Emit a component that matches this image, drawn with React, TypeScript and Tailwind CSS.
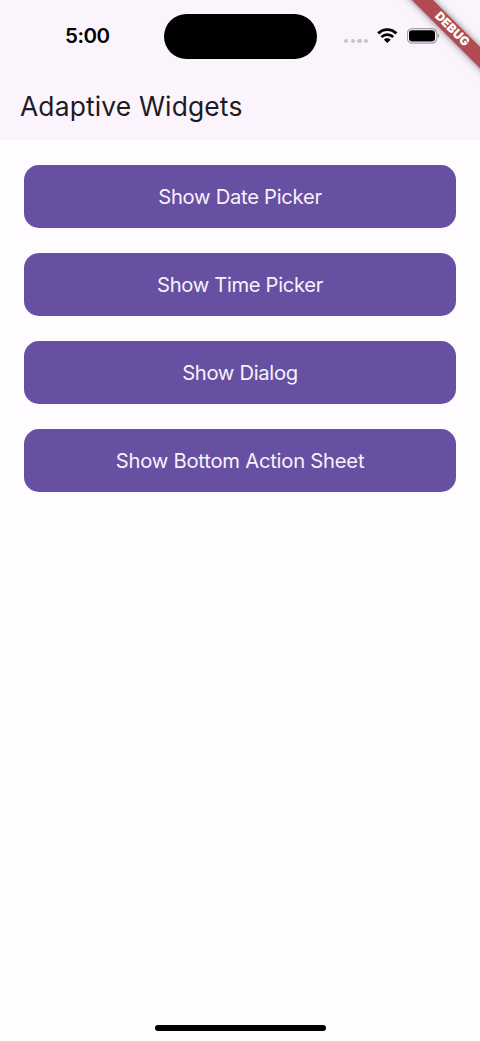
import React from "react";

const actions = [
  { label: "Show Date Picker", spacing: "tracking-[-0.27px]" },
  { label: "Show Time Picker", spacing: "tracking-[-0.33px]" },
  { label: "Show Dialog", spacing: "tracking-[-0.3px]" },
  { label: "Show Bottom Action Sheet", spacing: "tracking-[-0.22px]" },
];

function WifiIcon() {
  return (
    <svg className="ml-[9px] h-[16px] w-[21px]" viewBox="0 0 21 16" fill="none">
      <path d="M1.2 5.4C6.4 0.3 14.2 0.3 19.4 5.4" stroke="#000" strokeWidth="2.9" />
      <path d="M4.4 9C7.7 5.8 12.9 5.8 16.2 9" stroke="#000" strokeWidth="2.7" />
      <path d="M6.9 11.7C8.8 9.9 11.8 9.9 13.7 11.7L10.3 15.1Z" fill="#000" />
    </svg>
  );
}

function BatteryIcon() {
  return (
    <svg className="ml-[9px] h-[16px] w-[34px]" viewBox="0 0 34 16" fill="none">
      <rect x="0.4" y="0.6" width="29.4" height="14.6" rx="4.8" stroke="#a39fa5" strokeWidth="1.2" />
      <rect x="2" y="2.2" width="26" height="11.2" rx="3.1" fill="#000" />
      <path d="M30.8 5.3C32.8 6 32.8 9.4 30.8 10.1Z" fill="#a39fa5" />
    </svg>
  );
}

function StatusBar() {
  return (
    <div className="flex h-[72px] w-full items-start">
      <div className="w-[163.5px] pt-[24px] pl-[65px] text-[20.5px] leading-[24px] font-semibold tracking-[-0.5px] text-black">
        5:00
      </div>
      <div className="mt-[13.5px] h-[45px] w-[153px] rounded-full bg-black" />
      <div className="ml-[27.5px] flex h-[16px] flex-none items-start pt-[27.5px]">
        <div className="flex gap-[2.4px] pt-[11.5px]">
          <span className="size-[4.3px] rounded-full bg-[#c8c3ca]" />
          <span className="size-[4.3px] rounded-full bg-[#c8c3ca]" />
          <span className="size-[4.3px] rounded-full bg-[#c8c3ca]" />
          <span className="size-[4.3px] rounded-full bg-[#c8c3ca]" />
        </div>
        <WifiIcon />
        <BatteryIcon />
      </div>
    </div>
  );
}

function DebugBanner() {
  return (
    <div className="pointer-events-none absolute top-0 right-0 size-[100px] overflow-hidden">
      <div className="absolute top-[21.5px] left-[11.7px] flex h-[14.6px] w-[120px] rotate-45 items-center justify-center bg-[#b14a51] font-['Inter',sans-serif] text-[12.2px] leading-none font-black tracking-[0.1px] text-white shadow-[0_0_7px_rgba(0,0,0,0.5)]">
        DEBUG
      </div>
    </div>
  );
}

export default function App() {
  return (
    <div className="relative flex h-[1041px] w-[480px] flex-col overflow-hidden bg-[#fefcff] font-['Inter','Liberation_Sans',sans-serif]">
      <header className="h-[140px] bg-[#fbf4fd]">
        <StatusBar />
        <h1 className="pl-[20px] text-[26.4px] leading-[69px] font-normal tracking-[0.16px] whitespace-nowrap text-[#1d1b20]">
          Adaptive Widgets
        </h1>
      </header>
      <main className="flex flex-1 flex-col gap-[25px] px-[24.4px] pt-[25px]">
        {actions.map((action) => (
          <button
            key={action.label}
            className={`h-[63px] w-full rounded-[15px] bg-[#674fa2] pt-[2px] text-[20.2px] font-normal text-[#f6f2fb] ${action.spacing}`}
          >
            {action.label}
          </button>
        ))}
      </main>
      <footer className="flex justify-center pb-[10px]">
        <div className="h-[6px] w-[171px] rounded-full bg-black" />
      </footer>
      <DebugBanner />
    </div>
  );
}
